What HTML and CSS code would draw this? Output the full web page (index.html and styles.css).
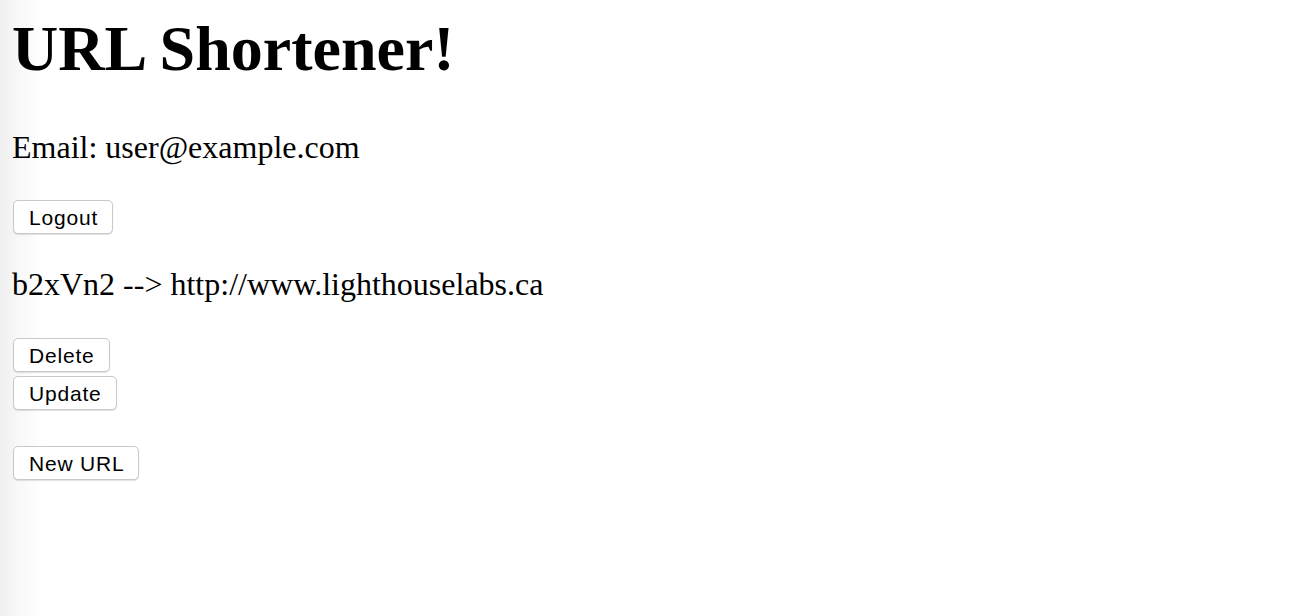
FILE: index.html
```html
<!DOCTYPE html>
<html>
<head>
<meta charset="utf-8">
<title>URL Shortener</title>
<link rel="stylesheet" href="styles.css">
</head>
<body>
<h1 class="title">URL Shortener!</h1>
<p class="email">Email: user@example.com</p>
<form class="logout-form"><button type="button" class="btn">Logout</button></form>
<p class="url-row">b2xVn2 --&gt; http://www.lighthouselabs.ca</p>
<div class="url-actions">
  <form><button type="button" class="btn">Delete</button></form>
  <form><button type="button" class="btn">Update</button></form>
</div>
<form class="new-form"><button type="button" class="btn">New URL</button></form>
</body>
</html>
```

FILE: styles.css
```css
html, body {
  height: 100%;
}
body {
  margin: 0;
  padding: 13px 12px 0 12px;
  box-sizing: border-box;
  background: linear-gradient(to right, #efefef 0px, #f8f8f8 18px, #ffffff 42px);
  font-family: "Liberation Serif", "Times New Roman", serif;
  font-size: 32px;
  color: #000;
}
.title {
  font-size: 64px;
  line-height: 71px;
  font-weight: bold;
  margin: 0 0 45px 0;
}
.email {
  margin: 0 0 34px 0;
  line-height: 37px;
}
.url-row {
  margin: 32px 0 35px 0;
  line-height: 37px;
}
form {
  margin: 0;
  display: flex;
}
.url-actions {
  display: flex;
  flex-direction: column;
  align-items: flex-start;
  gap: 4px;
}
.new-form {
  margin-top: 36px;
}
.btn {
  font-family: "Liberation Sans", Arial, sans-serif;
  font-size: 21px;
  letter-spacing: 0.8px;
  color: #000;
  background: #fff;
  border: 1px solid #c9c9c9;
  border-radius: 5px;
  height: 34px;
  padding: 2px 14px 0 15px;
  margin: 0 0 0 1px;
  box-shadow: 0 1px 1px rgba(0,0,0,0.12);
  line-height: 30px;
}
```
